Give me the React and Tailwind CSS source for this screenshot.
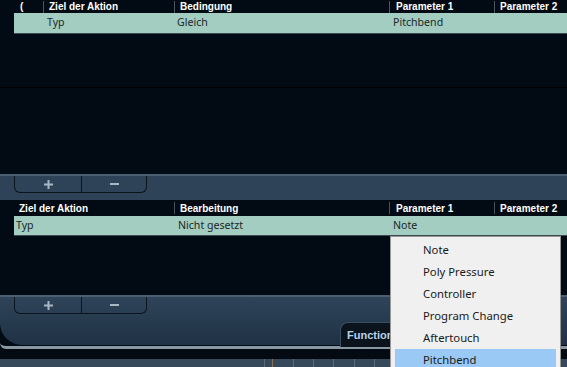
import React from "react";

const hdrFont = { fontFamily: '"Liberation Sans", sans-serif' };

function Sep() {
  return <div className="w-px h-[12px] bg-[#4a5662]" />;
}

function Buttons() {
  return (
    <div className="flex ml-[14px]">
      <div className="w-[68px] h-[17px] border border-t-0 border-[#0c141c] rounded-bl-[6px] flex items-center justify-center">
        <svg width="9" height="9" viewBox="0 0 9 9">
          <rect x="3.5" y="0" width="2" height="9" fill="#a9b7c4" />
          <rect x="0" y="3.5" width="9" height="2" fill="#a9b7c4" />
        </svg>
      </div>
      <div className="w-[65px] h-[17px] border border-t-0 border-l-0 border-[#0c141c] rounded-br-[6px] flex items-center justify-center">
        <div className="w-[9px] h-[2px] bg-[#a9b7c4]" />
      </div>
    </div>
  );
}

const menuItems = ["Note", "Poly Pressure", "Controller", "Program Change", "Aftertouch", "Pitchbend"];

export default function App() {
  return (
    <div className="relative w-[567px] h-[367px] overflow-hidden bg-[#020a13]" style={{ fontFamily: '"Noto Sans", sans-serif' }}>
      {/* top table */}
      <div className="h-[174px] flex flex-col">
        <div className="h-[13px] flex items-center text-white text-[10px] font-bold" style={hdrFont}>
          <div className="w-[43px] pl-[20px]">(</div>
          <Sep />
          <div className="w-[130px] pl-[5px]">Ziel der Aktion</div>
          <Sep />
          <div className="w-[214px] pl-[5px]">Bedingung</div>
          <Sep />
          <div className="w-[104px] pl-[6px]">Parameter 1</div>
          <Sep />
          <div className="flex-1 pl-[5px]">Parameter 2</div>
        </div>
        <div className="ml-[14px] h-[21px] bg-[#a3cdc1] border-b border-[#3d4a50] flex items-center text-[10.6px] text-[#1b2727]">
          <div className="w-[160px] pl-[33px]">Typ</div>
          <div className="w-[216px] pl-[3px]">Gleich</div>
          <div className="flex-1 pl-[3px]">Pitchbend</div>
        </div>
        <div className="h-[53px]" />
        <div className="h-px bg-[#000000]" />
      </div>

      {/* toolbar strip 1 */}
      <div className="h-[26px] bg-[#2e4357] border-t-2 border-[#4b5f71]">
        <Buttons />
      </div>

      {/* second table */}
      <div className="h-[95px] flex flex-col">
        <div className="h-[16px] flex items-center text-white text-[10px] font-bold" style={hdrFont}>
          <div className="w-[174px] pl-[19px]">Ziel der Aktion</div>
          <Sep />
          <div className="w-[214px] pl-[5px]">Bearbeitung</div>
          <Sep />
          <div className="w-[104px] pl-[6px]">Parameter 1</div>
          <Sep />
          <div className="flex-1 pl-[5px]">Parameter 2</div>
        </div>
        <div className="ml-[14px] h-[20px] bg-[#a3cdc1] border-b border-[#3d4a50] flex items-center text-[10.6px] text-[#1b2727]">
          <div className="w-[160px] pl-[2px]">Typ</div>
          <div className="w-[216px] pl-[4px]">Nicht gesetzt</div>
          <div className="flex-1 pl-[3px]">Note</div>
        </div>
      </div>

      {/* bottom panel */}
      <div className="h-[72px] flex flex-col">
        <div className="h-[50px] shrink-0 bg-gradient-to-b from-[#2f4459] to-[#1f3245] border-t-2 border-[#4b5f71] rounded-bl-[22px] relative">
          <Buttons />
          <div className="absolute left-[340px] top-[25px] w-[80px] h-[25px] bg-[#0b141d] border border-b-0 border-[#3a4e60] rounded-tl-[8px] flex items-center pl-[6px] text-[11px] font-bold text-[#b7d3ec]" style={hdrFont}>
            Function
          </div>
        </div>
        <div className="h-[6px] shrink-0 border-b-[3px] border-[#8997a3] rounded-bl-[20px] -mt-[2px]" />
        <div className="h-[10px] shrink-0 bg-[#030a12]" />
        <div className="flex-1 bg-[#35495a] flex">
          <div className="ml-[264px] w-px h-full bg-[#5a6a78]" />
          <div className="ml-[7px] w-px h-full bg-[#8a6a50]" />
          <div className="ml-[20px] w-px h-full bg-[#5a6a78]" />
          <div className="ml-[19px] w-px h-full bg-[#5a6a78]" />
          <div className="ml-[19px] w-px h-full bg-[#5a6a78]" />
          <div className="ml-[20px] w-px h-full bg-[#5a6a78]" />
          <div className="ml-[19px] w-px h-full bg-[#5a6a78]" />
        </div>
      </div>

      {/* dropdown menu */}
      <div className="absolute left-[390px] top-[236px] w-[171px] h-[140px] bg-[#f0f0f0] border border-[#979797] pt-[2px] px-[4px]">
        {menuItems.map((m) => (
          <div key={m} className={`h-[22px] flex items-center pl-[28px] text-[11.3px] text-[#1a1a1a] ${m === "Pitchbend" ? "bg-[#99c9f4]" : ""}`}>
            {m}
          </div>
        ))}
      </div>
    </div>
  );
}
